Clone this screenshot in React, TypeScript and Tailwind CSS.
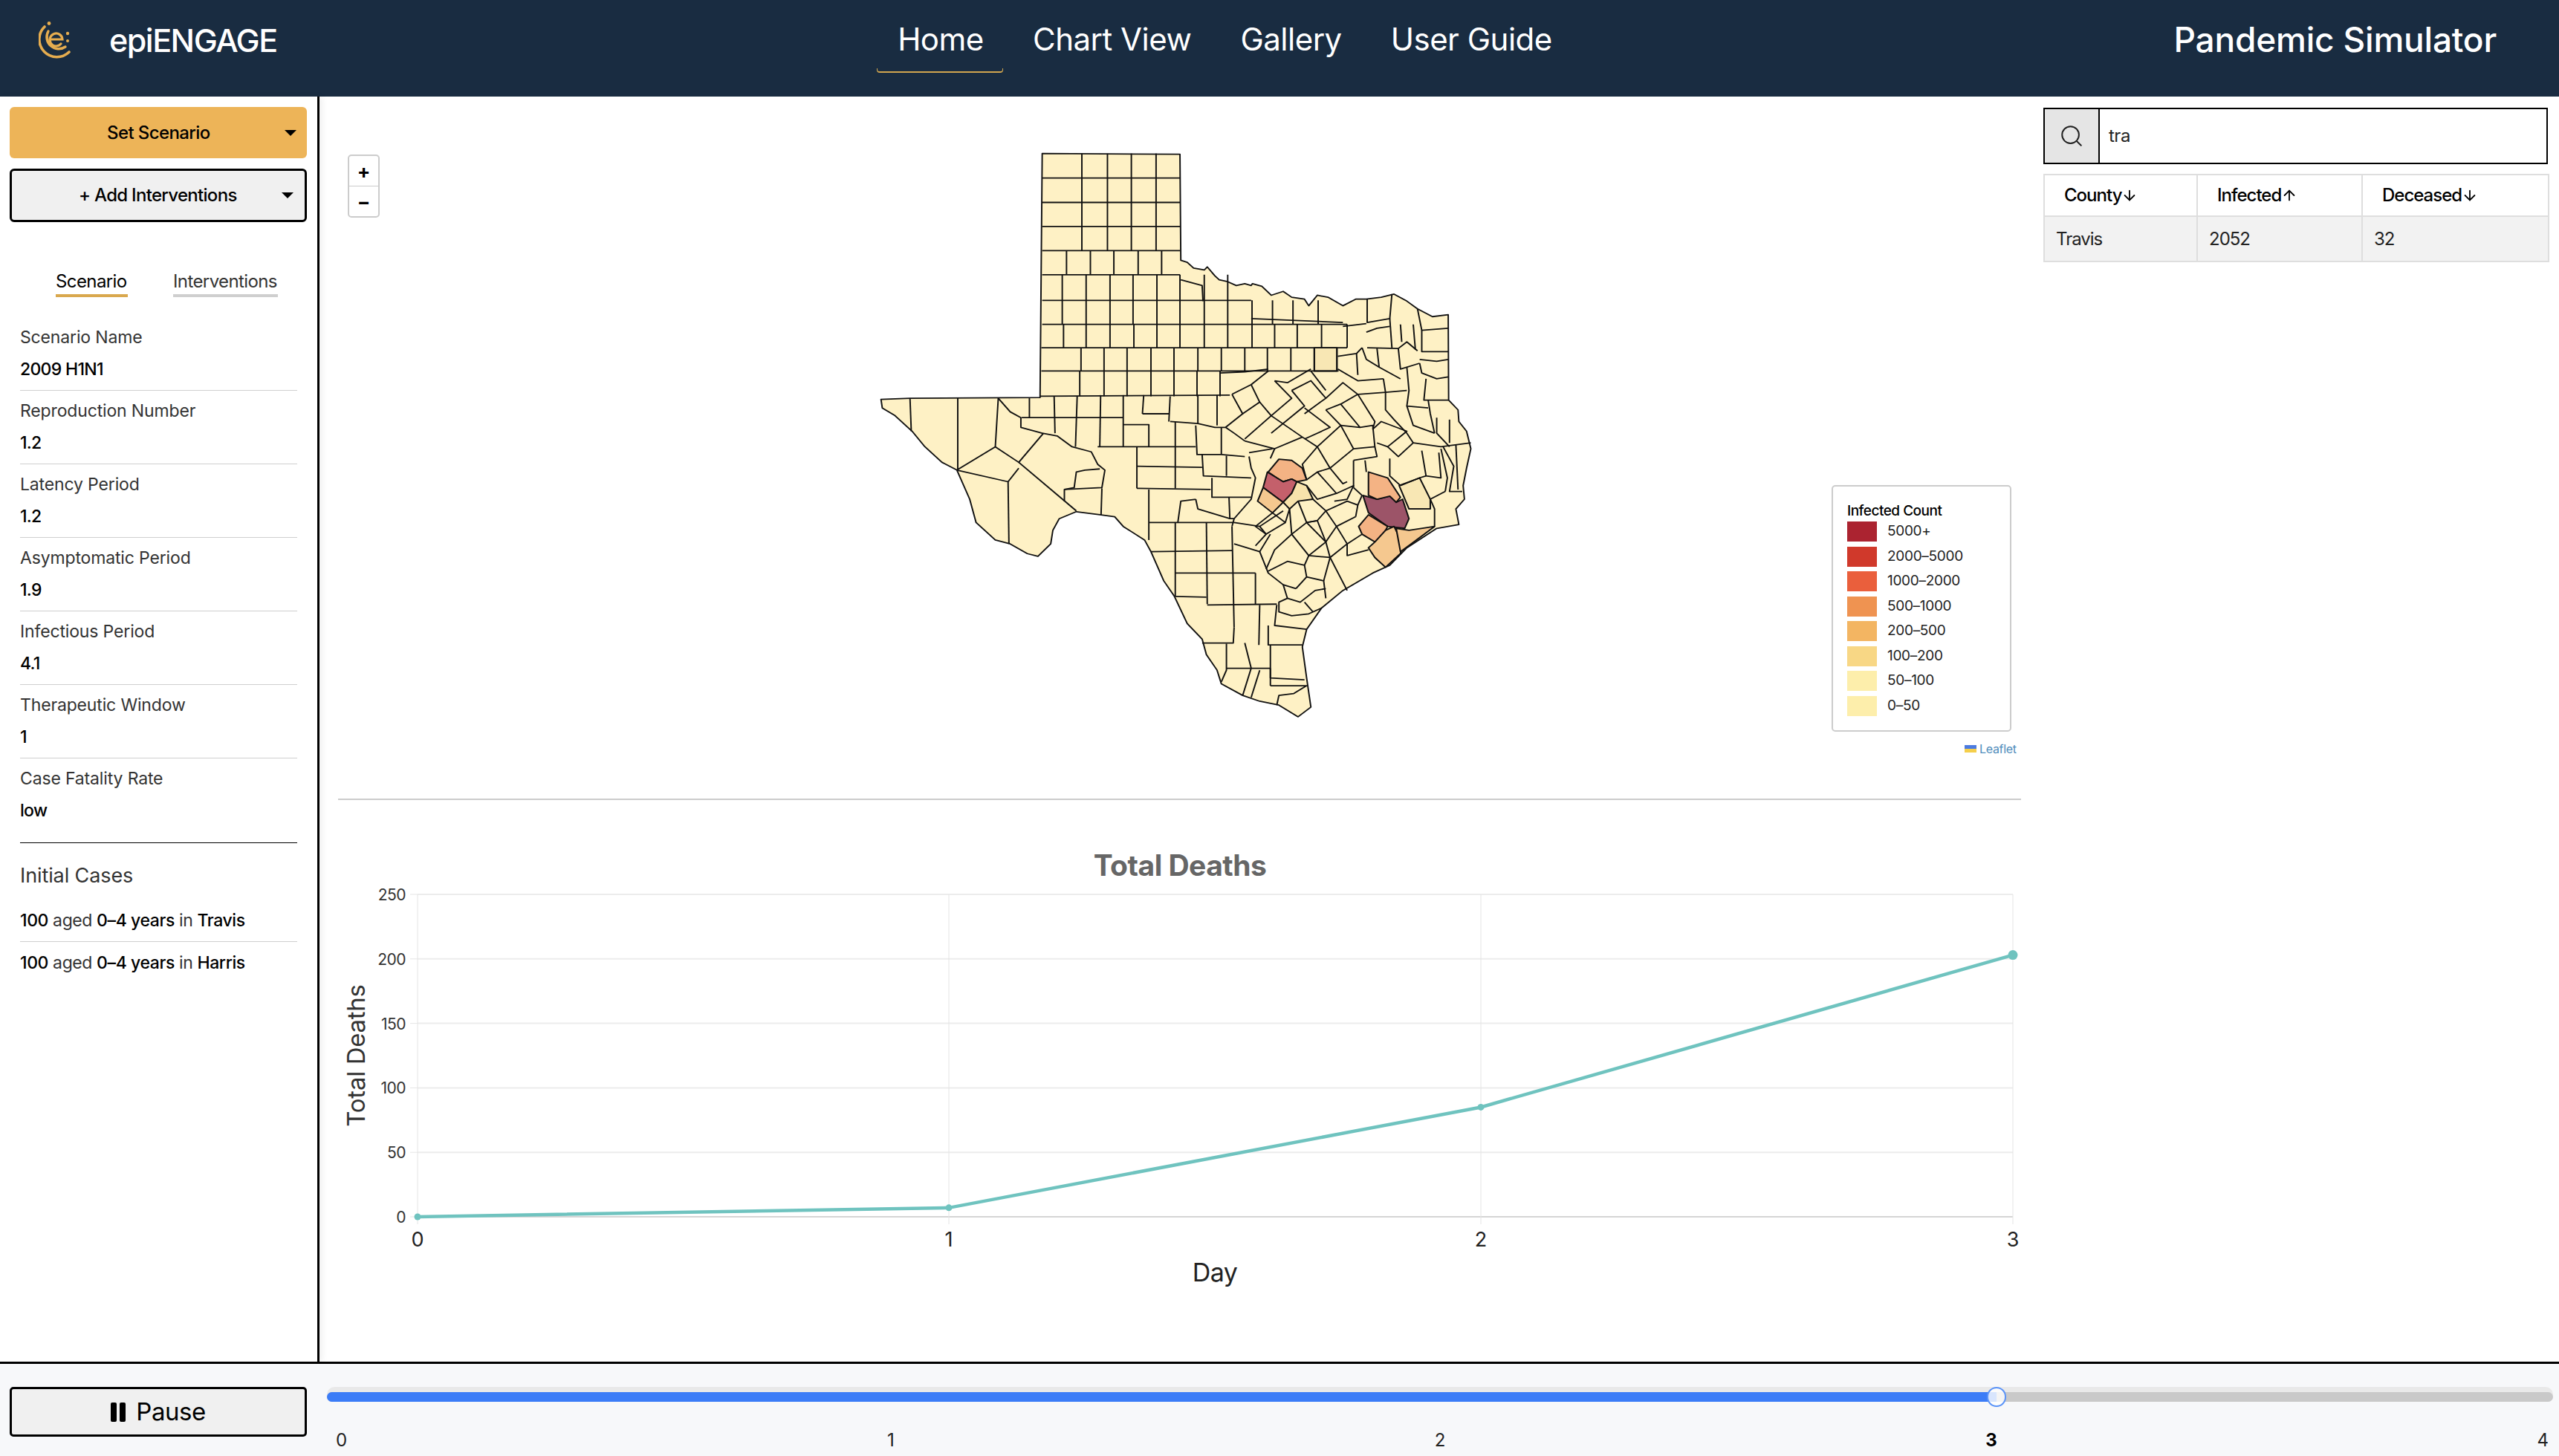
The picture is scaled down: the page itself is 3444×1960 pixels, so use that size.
import { ArrowDown, ArrowUp, Search } from 'lucide-react';

const fields = [
  { label: 'Scenario Name', value: '2009 H1N1' },
  { label: 'Reproduction Number', value: '1.2' },
  { label: 'Latency Period', value: '1.2' },
  { label: 'Asymptomatic Period', value: '1.9' },
  { label: 'Infectious Period', value: '4.1' },
  { label: 'Therapeutic Window', value: '1' },
  { label: 'Case Fatality Rate', value: 'low' },
];

const legend = [
  { label: '5000+', color: '#ab2330' },
  { label: '2000–5000', color: '#d0392b' },
  { label: '1000–2000', color: '#ea5f3c' },
  { label: '500–1000', color: '#ef9351' },
  { label: '200–500', color: '#f3b562' },
  { label: '100–200', color: '#f8d785' },
  { label: '50–100', color: '#fdeeab' },
  { label: '0–50', color: '#fdeeab' },
];

const texas =
  '475,70 798,72 800,345 815,350 830,365 855,370 862,362 880,385 890,395 910,400 930,410 950,405 965,410 968,405 990,412 1012,435 1040,425 1060,440 1090,445 1100,462 1120,435 1145,440 1180,462 1210,445 1235,445 1270,440 1300,432 1330,450 1355,470 1390,490 1427,485 1428,705 1450,730 1452,760 1470,785 1480,830 1470,880 1462,925 1465,960 1445,985 1452,1025 1400,1035 1330,1085 1290,1130 1250,1150 1180,1195 1130,1240 1095,1295 1085,1340 1095,1420 1105,1495 1075,1520 1030,1490 985,1480 945,1465 895,1435 885,1400 860,1360 850,1320 815,1280 785,1210 760,1170 730,1095 715,1065 665,1030 645,1005 610,1000 555,992 515,1010 500,1040 495,1075 465,1107 440,1100 400,1075 365,1065 320,1020 305,960 275,885 240,865 200,825 170,785 130,745 100,725 97,703 165,700 470,698';

const hotCounties = [
  { fill: '#f4b384', points: '1005,890 1030,857 1060,860 1085,880 1095,910 1072,915 1060,908 1040,915 1025,905' },
  { fill: '#c4606b', points: '1003,890 1025,905 1040,915 1060,908 1072,915 1060,945 1040,968 993,930' },
  { fill: '#f5c88f', points: '993,930 1040,968 1015,995 980,965' },
  { fill: '#f8e3ab', points: '1072,915 1095,925 1110,960 1075,965 1055,985 1040,968 1060,945' },
  { fill: '#9c5468', points: '1227,950 1260,960 1290,952 1305,968 1320,960 1335,1010 1325,1035 1285,1030 1240,995' },
  { fill: '#f4b384', points: '1240,890 1285,905 1315,955 1305,968 1290,952 1260,960 1240,950' },
  { fill: '#f4b384', points: '1240,1000 1285,1030 1275,1050 1255,1070 1225,1050 1217,1030' },
  { fill: '#f5c88f', points: '1255,1070 1280,1040 1300,1030 1320,1075 1315,1100 1280,1135 1255,1110 1240,1085' },
  { fill: '#f5c88f', points: '1305,1035 1335,1040 1395,1030 1340,1075 1315,1095' },
  { fill: '#f8e7b4', points: '1312,925 1360,905 1385,960 1385,985 1335,985' },
  { fill: '#f8e7b4', points: '1113,570 1166,570 1166,630 1113,630' },
];

// panhandle and north Texas are close to a plain grid
const gridRows = [
  { top: 70, bottom: 133, xs: [568, 628, 684, 742] },
  { top: 133, bottom: 196, xs: [568, 628, 684, 742] },
  { top: 196, bottom: 258, xs: [568, 628, 684, 742] },
  { top: 258, bottom: 320, xs: [568, 628, 684, 742] },
  { top: 320, bottom: 382, xs: [532, 588, 643, 700, 755] },
  { top: 382, bottom: 448, xs: [522, 578, 634, 688, 744, 798, 855, 910] },
  { top: 448, bottom: 510, xs: [522, 578, 634, 688, 744, 798, 855, 910, 967, 1015, 1063, 1122] },
  { top: 510, bottom: 570, xs: [525, 578, 634, 690, 744, 798, 855, 910, 967, 1020, 1073, 1130, 1190] },
  { top: 570, bottom: 630, xs: [566, 620, 674, 730, 784, 840, 895, 950, 1003, 1058, 1113, 1166] },
  { top: 630, bottom: 695, xs: [563, 620, 674, 730, 784, 838, 892] },
];

const gridLines = [
  '475,133 798,133', '475,196 798,196', '475,258 798,258', '475,320 798,320', '475,382 798,382',
  '475,448 965,448', '800,395 850,410 852,450', '965,495 1180,505', '475,510 1190,510', '473,570 1190,570', '473,630 1170,630', '470,695 915,692',
];

const countyLines = [
  // far west
  '165,700 168,785', '277,700 277,885', '372,700 365,825 275,885', '365,825 420,865 478,790',
  '275,885 395,915 420,880', '420,865 555,990', '395,915 397,1075',
  '372,700 400,735 425,750 425,775 475,790 510,797 545,825 590,838 605,870 622,885 615,930 527,935 527,965',
  '527,935 550,930 555,890 575,885 610,882',
  '445,700 445,750', '503,695 505,790', '557,695 553,825', '612,692 610,825', '665,692 665,825',
  '713,692 710,740', '427,750 665,750', '710,740 772,740', '775,695 772,760', '665,768 725,768 725,825',
  '787,760 787,825', '605,825 835,825', '697,825 697,932', '787,825 787,932', '697,875 850,878', '697,932 870,935',
  '615,932 613,1000', '725,935 725,1065', '725,1020 925,1020',
  '835,770 838,845 895,845 950,850', '775,760 840,765 880,775 905,775 925,790 950,810',
  '895,775 895,845', '840,692 840,765', '885,692 885,770', '850,845 853,900 965,905', '907,848 907,900',
  '873,905 873,955 965,955', '913,955 915,1010', '835,960 800,965 793,1020', '835,960 840,985 915,1010 925,1010 920,1030',
  '960,850 965,880 975,905 965,960 925,1010',
  // north east
  '1237,445 1237,505 1290,495 1295,432', '1180,515 1235,508', '1235,530 1260,520 1290,515', '1290,495 1295,570',
  '1315,510 1318,555', '1345,510 1350,575', '1355,470 1365,525 1427,520', '1365,525 1365,580 1427,580',
  '1237,570 1310,572 1330,555 1355,578', '1310,572 1315,625 1360,610', '1260,572 1265,620 1315,650',
  '1225,570 1235,600 1265,620', '1168,592 1212,585 1225,570', '1212,585 1215,640', '1168,625 1215,655 1275,650',
  '1275,650 1280,685 1330,680', '1360,600 1400,605 1427,600', '1360,610 1365,635 1400,650 1427,645',
  '1375,650 1370,705 1427,705', '1330,620 1335,680 1330,720 1380,725', '1380,705 1385,740 1395,790',
  '1280,685 1280,730 1300,755 1330,790', '1215,690 1280,685', '1215,690 1255,760 1250,780', '1400,750 1400,790 1430,825',
  '1430,755 1430,815', '1330,720 1345,770 1395,790',
  // central diagonals
  '892,635 950,632 1005,625', '920,690 965,665 1005,630', '920,690 945,740 905,775', '945,740 985,710 965,665',
  '985,710 1012,745 950,805', '1012,745 1060,700 1020,655', '1020,655 1050,660 1105,625', '1060,680 1090,720 1012,790',
  '1060,680 1105,655 1140,700 1090,740', '1140,700 1180,660 1215,690', '1105,630 1140,680', '1090,725 1150,775 1090,805',
  '1012,745 1085,800 1020,830', '950,810 1020,830 1010,855', '960,840 1015,830', '1085,800 1120,825 1175,770 1140,730',
  '1140,730 1175,715 1220,775 1175,770', '1175,715 1215,690', '1120,825 1085,870 1095,910', '1120,825 1150,880 1205,830 1175,770',
  '1205,830 1255,825 1260,850 1205,860', '1220,775 1250,770 1255,825', '1250,780 1270,760 1330,785 1285,825 1260,815',
  '1285,825 1310,850 1345,815 1330,790', '1345,815 1410,825 1480,815', '1415,825 1440,875 1430,940 1460,940',
  '1365,835 1375,900 1410,905 1405,840', '1410,830 1425,905 1420,940', '1445,820 1450,935', '1290,855 1290,900 1315,925',
  '1315,925 1360,905 1375,900', '1205,860 1205,930', '1232,860 1235,890', '1150,880 1180,920 1190,915',
  '1095,910 1120,890 1150,880', '1120,890 1165,945 1120,960 1095,925', '1165,945 1205,925 1190,960 1160,965',
  '1205,930 1225,950', '1385,960 1395,985 1395,1030', '1385,985 1335,985', '1420,940 1385,960',
  // south central
  '1110,960 1140,990 1120,1015 1095,1020', '1075,965 1095,1020 1060,1050 1055,985', '1140,990 1190,965 1215,975 1210,1005',
  '1215,975 1225,950', '1140,990 1165,1030 1210,1005', '1165,1030 1140,1070 1120,1015', '1165,1030 1190,1075 1225,1050',
  '1120,1015 1095,1020 1140,1070 1100,1105 1060,1050', '1060,1050 1020,1090 1000,1140', '1190,1075 1150,1110 1190,1195',
  '1140,1070 1150,1110 1100,1105', '1190,1075 1190,1105 1240,1090', '1015,995 1045,1020 1055,985', '1015,995 975,1030 1000,1050 1045,1020',
  // south
  '787,1020 787,1210', '860,1020 862,1230', '920,1030 925,1290', '730,1095 920,1092', '787,1150 975,1150', '787,1210 860,1212',
  '862,1232 1025,1230', '975,1150 975,1230', '925,1075 985,1095 1010,1050', '925,1020 985,1030 1000,1050 975,1080',
  '985,1030 1040,990', '985,1095 1005,1150 1040,1180 1070,1190', '1005,1145 1050,1120 1090,1130 1095,1160 1070,1190',
  '1100,1105 1090,1130', '1095,1160 1135,1170 1140,1215', '1150,1110 1135,1170', '1040,1180 1050,1215 1030,1225 1030,1250 1060,1260 1100,1255 1130,1240',
  '1050,1215 1080,1225 1115,1195 1140,1190', '1090,1225 1110,1250', '1025,1232 1020,1285 1095,1295', '985,1232 983,1335',
  '925,1290 923,1330 850,1330', '1005,1285 1005,1335 1085,1335', '907,1332 907,1400 895,1430', '950,1330 965,1395 1010,1395',
  '1010,1335 1010,1440', '907,1395 965,1395 945,1465', '1010,1395 1010,1420 1090,1425', '1010,1440 1095,1440 1065,1460 1030,1465 1025,1490',
  '985,1400 965,1470',
];

function TexasMap() {
  return (
    <svg viewBox="0 0 1568 1568" preserveAspectRatio="none" className="absolute left-[675px] top-[40px] w-[900px] h-[820px]">
      <polygon points={texas} fill="#fef1c5" />
      {hotCounties.map((county) => (
        <polygon key={county.points} points={county.points} fill={county.fill} stroke="#111" strokeWidth="3.6" strokeLinejoin="round" />
      ))}
      <g fill="none" stroke="#111" strokeWidth="3.4" strokeLinejoin="round">
        {gridRows.map((row) =>
          row.xs.map((x) => <line key={`${row.top}-${x}`} x1={x} y1={row.top} x2={x} y2={row.bottom} />),
        )}
        {gridLines.map((points) => (
          <polyline key={points} points={points} />
        ))}
        {countyLines.map((points) => (
          <polyline key={points} points={points} />
        ))}
        <polygon points={texas} strokeWidth="3.4" />
      </g>
    </svg>
  );
}

function Logo() {
  return (
    <svg viewBox="0 0 44 50" className="w-[44px] h-[50px]" fill="none" stroke="#e6ad4f" strokeLinecap="round">
      <circle cx="14" cy="2.5" r="2.4" fill="#e6ad4f" stroke="none" />
      <path d="M8 7 A23 23 0 0 0 41 41" strokeWidth="3.6" />
      <path d="M13 13 A16 16 0 0 0 36 34" strokeWidth="3.4" />
      <path d="M17 24 H32 A8.5 8.5 0 1 0 30 30" strokeWidth="3.2" />
      <circle cx="39" cy="16" r="2.2" fill="#e6ad4f" stroke="none" />
      <circle cx="39" cy="26" r="2" fill="#e6ad4f" stroke="none" />
    </svg>
  );
}

function Caret() {
  return <span className="w-0 h-0 border-x-[8px] border-t-[8px] border-x-transparent border-t-black" />;
}

function Header() {
  return (
    <header className="h-[130px] shrink-0 bg-[#192c41] text-white flex items-start">
      <div className="w-[500px] flex items-center pl-[52px] pt-[29px] gap-[51px]">
        <Logo />
        <span className="text-[43px] leading-[50px] tracking-[-1.5px] font-medium">epiENGAGE</span>
      </div>
      <nav className="ml-[708px] flex pt-[24px] gap-[66px] text-[42px] leading-[58px] tracking-[-0.5px]">
        <a className="w-[116px] relative text-center whitespace-nowrap">
          Home
          <span className="absolute left-[-28px] right-[-26px] top-[68px] h-[6px] border-b-2 border-x border-[#d1a64f] rounded-b-[4px]" />
        </a>
        <a className="whitespace-nowrap">Chart View</a>
        <a className="whitespace-nowrap">Gallery</a>
        <a className="whitespace-nowrap">User Guide</a>
      </nav>
      <div className="ml-auto pr-[84px] pt-[24px] text-[46px] leading-[58px] tracking-[-0.2px] font-medium">Pandemic Simulator</div>
    </header>
  );
}

function Sidebar() {
  return (
    <aside className="w-[430px] shrink-0 border-r-[3px] border-black shadow-[4px_0_8px_rgba(0,0,0,0.06)] text-black">
      <div className="px-[13px] pt-[14px] flex flex-col gap-[14px] w-[426px]">
        <button className="h-[69px] rounded-[6px] bg-[#edb458] text-[24px] font-medium tracking-[-0.6px] flex items-center pl-[131px] pr-[14px] justify-between">
          Set Scenario
          <Caret />
        </button>
        <button className="h-[72px] rounded-[6px] bg-[#f0f0f0] border-[3px] border-black text-[24px] font-medium tracking-[-0.7px] flex items-center pl-[90px] pr-[15px] justify-between">
          + Add Interventions
          <Caret />
        </button>
      </div>
      <div className="mt-[66px] flex pl-[75px] gap-[61px] text-[24px] leading-[28px] tracking-[-0.6px]">
        <span className="w-[97px] pb-[3px] border-b-4 border-[#d9a84e] whitespace-nowrap">Scenario</span>
        <span className="w-[141px] pb-[3px] border-b-4 border-[#cfcfcf] whitespace-nowrap text-[#333]">Interventions</span>
      </div>
      <div className="mt-[27px] mx-[27px] w-[373px]">
        {fields.map((field, i) => (
          <div key={field.label} className={`h-[99px] pt-[13px] ${i < fields.length - 1 ? 'border-b border-[#cfcfcf]' : ''}`}>
            <div className="text-[23px] leading-[28px] tracking-[-0.15px] text-[#333]">{field.label}</div>
            <div className="mt-[15px] text-[23px] leading-[28px] tracking-[-0.7px] font-medium">{field.value}</div>
          </div>
        ))}
        <div className="mt-[14px] border-t border-black pt-[28px] text-[27px] leading-[32px] tracking-[-0.1px] text-[#333]">Initial Cases</div>
        {['Travis', 'Harris'].map((county, i) => (
          <div key={county} className={`h-[57px] flex items-center text-[23px] tracking-[-0.4px] ${i === 0 ? 'mt-[16px] border-b border-[#cfcfcf]' : ''}`}>
            <span className="font-medium">100</span>
            <span className="text-[#333]">&nbsp;aged&nbsp;</span>
            <span className="font-medium">0–4 years</span>
            <span className="text-[#333]">&nbsp;in&nbsp;</span>
            <span className="font-medium">{county}</span>
          </div>
        ))}
      </div>
    </aside>
  );
}

function MapLegend() {
  return (
    <div className="absolute left-[2010px] top-[523px] w-[242px] h-[332px] rounded-[5px] border-2 border-[#ccc] bg-white pl-[19px] pt-[20px] text-black">
      <div className="text-[19px] leading-[26px] tracking-[-0.5px] font-medium">Infected Count</div>
      <div className="mt-[1px] flex flex-col gap-[6.5px]">
        {legend.map((item) => (
          <div key={item.label} className="flex items-center gap-[14px] h-[27px]">
            <span className="w-[40px] h-[27px]" style={{ backgroundColor: item.color }} />
            <span className="text-[19px] tracking-[-0.3px] text-[#222]">{item.label}</span>
          </div>
        ))}
      </div>
    </div>
  );
}

function MapPanel() {
  return (
    <div className="relative h-[945px] ml-[25px]">
      <TexasMap />
      <div className="absolute left-[13px] top-[78px] w-[43px] h-[85px] rounded-[5px] border-2 border-[#ccc] bg-white flex flex-col text-black font-bold text-[26px]">
        <span className="h-[41px] flex items-center justify-center border-b border-[#ccc]">+</span>
        <span className="flex-1 flex items-center justify-center">−</span>
      </div>
      <MapLegend />
      <div className="absolute left-[2189px] top-[868px] flex items-center gap-[4px] text-[16px] leading-[20px] tracking-[-0.3px] text-[#4f8dbb]">
        <span className="w-[16px] h-[10px] flex flex-col">
          <span className="h-[5px] bg-[#4c7be0]" />
          <span className="h-[5px] bg-[#f5cf4b]" />
        </span>
        Leaflet
      </div>
    </div>
  );
}

function DeathsChart() {
  const xs = [562, 1277, 1993, 2709];
  const yFor = (v: number) => 1638 - v * 1.736;
  const ticks = [0, 50, 100, 150, 200, 250];
  const data = [0, 7, 85, 203];
  return (
    <svg viewBox="455 1077 2265 756" className="block ml-[25px] w-[2265px] h-[756px]">
      <text x="1588" y="1179" textAnchor="middle" fontSize="39" fontWeight="700" letterSpacing="-0.5" fill="#666">Total Deaths</text>
      {ticks.map((t) => (
        <g key={t}>
          <line x1="562" x2="2709" y1={yFor(t)} y2={yFor(t)} stroke={t === 0 ? '#d5d5d5' : '#ececec'} strokeWidth="2" />
          <line x1="552" x2="562" y1={yFor(t)} y2={yFor(t)} stroke="#e5e5e5" strokeWidth="1" />
          <text x="546" y={yFor(t) + 8} textAnchor="end" fontSize="21" letterSpacing="-0.5" fill="#333">{t}</text>
        </g>
      ))}
      {xs.map((x, i) => (
        <g key={x}>
          <line x1={x} x2={x} y1="1204" y2="1648" stroke="#e4e4e4" strokeWidth="1" />
          <text x={x} y="1678" textAnchor="middle" fontSize="27" fill="#222">{i}</text>
        </g>
      ))}
      <polyline points={xs.map((x, i) => `${x},${yFor(data[i])}`).join(' ')} fill="none" stroke="#6fc3bf" strokeWidth="4.5" />
      {xs.map((x, i) => (
        <circle key={x} cx={x} cy={yFor(data[i])} r={i === 3 ? 6.5 : 4.5} fill="#6fc3bf" />
      ))}
      <text x="1635" y="1725" textAnchor="middle" fontSize="34" letterSpacing="-0.5" fill="#222">Day</text>
      <text transform="translate(491 1421) rotate(-90)" textAnchor="middle" fontSize="33" letterSpacing="-0.3" fill="#333">Total Deaths</text>
    </svg>
  );
}

function CountyTable() {
  const columns = [
    { label: 'County', up: false, value: 'Travis', width: 'w-[206px]' },
    { label: 'Infected', up: true, value: '2052', width: 'w-[222px]' },
    { label: 'Deceased', up: false, value: '32', width: 'w-[251px]' },
  ];
  return (
    <aside className="w-[724px] shrink-0 pl-[30px] pr-[15px] pt-[15px] text-black">
      <div className="h-[76px] border-2 border-black flex">
        <div className="w-[74px] bg-[#e5e5e5] border-r-2 border-black flex items-center justify-center">
          <Search size={34} strokeWidth={1.4} className="text-[#222]" />
        </div>
        <div className="flex-1 pl-[12px] flex items-center text-[24px] tracking-[-0.5px] text-[#222]">tra</div>
      </div>
      <table className="mt-[13px] w-[679px] table-fixed border-collapse text-[24px]">
        <thead>
          <tr className="h-[56px]">
            {columns.map((c) => (
              <th key={c.label} className={`${c.width} border-2 border-[#dedede] pl-[26px] text-left font-medium tracking-[-1px]`}>
                <span className="inline-flex items-center">
                  {c.label}
                  {c.up ? <ArrowUp size={22} strokeWidth={2} /> : <ArrowDown size={22} strokeWidth={2} />}
                </span>
              </th>
            ))}
          </tr>
        </thead>
        <tbody>
          <tr className="h-[61px] bg-[#f2f2f2]">
            {columns.map((c) => (
              <td key={c.label} className="border-2 border-[#dedede] pl-[15px] tracking-[-1px] text-[#222]">{c.value}</td>
            ))}
          </tr>
        </tbody>
      </table>
    </aside>
  );
}

function Timeline() {
  return (
    <footer className="h-[127px] shrink-0 border-t-[3px] border-black bg-[#f7f8fa] flex text-black">
      <div className="pl-[13px] pt-[31px] w-[440px]">
        <button className="w-[400px] h-[67px] rounded-[5px] bg-[#f0f0f0] border-[3px] border-black text-[33px] tracking-[-0.5px] flex items-center justify-center gap-[14px]">
          <svg viewBox="0 0 20 26" className="w-[20px] h-[26px]">
            <rect x="0" y="0" width="8" height="26" rx="2" />
            <rect x="12" y="0" width="8" height="26" rx="2" />
          </svg>
          Pause
        </button>
      </div>
      <div className="flex-1 pr-[8px] pt-[31px]">
        <div className="relative h-[20px] rounded-full bg-[#e9e9e9]">
          <div className="absolute left-0 right-0 top-[7px] h-[13px] rounded-full bg-[#c9c9c9]" />
          <div className="absolute left-0 top-[7px] h-[13px] w-[2247px] rounded-l-full bg-[#3b7cf7]" />
          <div className="absolute left-[2234px] top-0 w-[26px] h-[27px] rounded-full border-2 border-[#5a93f8] bg-white/80" />
        </div>
        <div className="mt-[38px] pl-[12px] pr-[6px] flex justify-between text-[24px] leading-[28px] text-[#222]">
          <span>0</span>
          <span>1</span>
          <span>2</span>
          <span className="font-bold text-black">3</span>
          <span>4</span>
        </div>
      </div>
    </footer>
  );
}

export default function App() {
  return (
    <div className="w-[3444px] h-[1960px] flex flex-col bg-white overflow-hidden font-['Inter',sans-serif]">
      <Header />
      <div className="flex-1 flex min-h-0">
        <Sidebar />
        <main className="flex-1 min-w-0">
          <MapPanel />
          <div className="ml-[25px] h-[2px] bg-[#ccc]" />
          <DeathsChart />
        </main>
        <CountyTable />
      </div>
      <Timeline />
    </div>
  );
}
